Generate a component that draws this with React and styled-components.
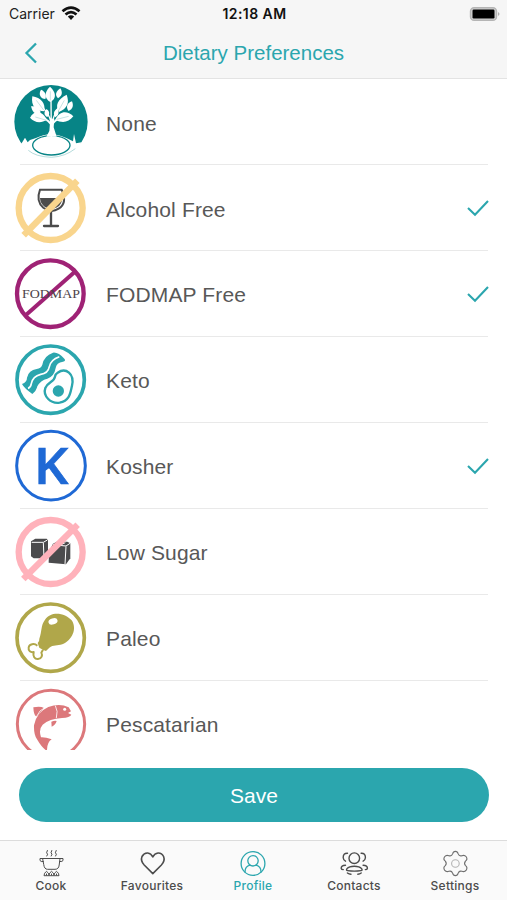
import React from "react";
import styled, { createGlobalStyle } from "styled-components";

const TEAL = "#2ba6ae";

const GlobalStyle = createGlobalStyle`
  * { box-sizing: border-box; }
  body { margin: 0; background: #fff; -webkit-font-smoothing: antialiased; }
`;

const Screen = styled.div`
  display: flex;
  flex-direction: column;
  width: 507px;
  height: 900px;
  overflow: hidden;
  background: #fff;
  font-family: "Liberation Sans", Arial, sans-serif;
`;

const Header = styled.header`
  height: 79px;
  flex: none;
  background: #f6f6f6;
  border-bottom: 1px solid #e3e3e3;
`;

const StatusBar = styled.div`
  height: 27px;
  display: grid;
  grid-template-columns: 1fr auto 1fr;
  align-items: center;
  padding: 0 7px 0 9px;
  font-family: Inter, sans-serif;
  font-size: 14px;
  color: #222;
`;

const Carrier = styled.div`
  display: flex;
  align-items: center;
  gap: 6px;
`;

const Clock = styled.div`
  font-weight: 600;
  font-size: 14px;
  letter-spacing: 0.42px;
  color: #111;
`;

const BatteryIcon = styled.svg`
  justify-self: end;
`;

const NavBar = styled.div`
  height: 51px;
  display: grid;
  grid-template-columns: 60px 1fr 60px;
  align-items: center;
`;

const BackButton = styled.button`
  border: 0;
  padding: 0 0 0 24px;
  background: none;
  display: flex;
`;

const Title = styled.h1`
  margin: 0;
  text-align: center;
  font-size: 20.5px;
  font-weight: 400;
  color: ${TEAL};
`;

const List = styled.ul`
  list-style: none;
  margin: 0;
  padding: 0;
  height: 671px;
  flex: none;
  overflow: hidden;
`;

const Row = styled.li`
  height: 85.9px;
  display: flex;
  align-items: flex-start;
  padding: 1px 19px 0 5px;
`;

const Badge = styled.svg`
  width: 92px;
  height: 84px;
  flex: none;
  margin-top: 0.3px;
`;

const RowBody = styled.div`
  flex: 1;
  height: 85.4px;
  margin-left: -77px;
  padding: 2px 0 0 86px;
  display: flex;
  align-items: center;
  justify-content: space-between;
  color: #585858;
  font-size: 21px;
  letter-spacing: 0.15px;
  background: linear-gradient(#e9e9e9, #e9e9e9) bottom / 100% 1px no-repeat;
`;

const CheckIcon = styled.svg`
  width: 22px;
  height: 18px;
  margin: -3px -1px 0 0;
  fill: none;
  stroke: ${TEAL};
  stroke-width: 2.1;
`;

const Footer = styled.div`
  height: 90px;
  flex: none;
  padding: 18px 18px 0 19px;
`;

const SaveButton = styled.button`
  width: 100%;
  height: 54px;
  border: 0;
  border-radius: 27px;
  background: ${TEAL};
  color: #fff;
  font: 400 21px "Liberation Sans", Arial, sans-serif;
  padding: 2px 0 0;
`;

const TabBar = styled.nav`
  flex: 1;
  display: grid;
  grid-template-columns: repeat(5, 101px);
  justify-content: center;
  border-top: 1px solid #dcdcdc;
  background: #fafafa;
`;

const Tab = styled.a`
  display: flex;
  flex-direction: column;
  align-items: center;
  padding: 7px 1px 0 0;
  color: ${(p) => (p.$active ? TEAL : "#4c4c4c")};
  font: 500 12px/15px Inter, sans-serif;
  letter-spacing: 0.25px;
`;

const TabIcon = styled.svg`
  width: 32px;
  height: 30px;
  fill: none;
  stroke: currentColor;
  stroke-width: ${(p) => p.$weight || 1.2};
  stroke-linecap: round;
  stroke-linejoin: round;
`;

const NoneArt = () => (
  <>
    <circle cx="138" cy="125" r="110" fill="#078486" />
    <path d="M49 191L60 173L68 187L75 180L93 174Q137 151 184 174L204 184L207 162L213 190L230 187Q201 237 138 237Q78 235 49 191Z" fill="#fff" />
    <ellipse cx="139" cy="196" rx="56" ry="29" fill="none" stroke="#078486" strokeWidth="4" />
    <path d="M70 211Q91 230 139 232Q180 230 211 206" fill="none" stroke="#8fc9c9" strokeWidth="2" />
    <g fill="none" stroke="#fff" strokeLinecap="round">
      <path d="M138 52L139 170M139 131Q132 94 103 75M141 131Q147 97 170 70" strokeWidth="4" />
      <path d="M138 132Q121 111 92 112M142 132Q158 112 180 112" strokeWidth="6" />
    </g>
    <path d="M136 116L148 116L146 142L155 170H124L133 153Z" fill="#fff" />
    <g fill="#fff">
      <path d="M135 20C117 36 118 56 136 66C156 55 153 36 135 20Z" />
      <path d="M82 49C77 78 93 94 118 94C122 70 108 53 82 49Z" />
      <path d="M185 44C158 57 149 77 162 96C187 85 194 68 185 44Z" />
      <path d="M75 113C89 87 111 92 126 119C107 131 89 128 75 113Z" />
      <path d="M151 119C165 91 187 92 205 109C190 128 171 130 151 119Z" />
      <path d="M108 29C99 43 107 56 121 57C126 44 119 33 108 29Z" />
      <path d="M166 25C152 34 149 46 159 55C171 48 174 38 166 25Z" />
      <path d="M78 79C84 103 96 106 107 97C103 84 92 78 78 79Z" />
      <path d="M201 64C185 68 182 84 191 93C204 87 206 77 201 64Z" />
      <path d="M125 87C115 96 117 107 127 111C135 103 134 94 125 87Z" />
      <path d="M157 85C144 95 145 104 151 112C162 105 163 96 157 85Z" />
    </g>
    <path d="M136 34V61M94 61L116 90M178 61L160 93M91 111L125 121M191 109L155 118" fill="none" stroke="#8cc6c6" strokeWidth="1.5" />
  </>
);

const AlcoholArt = () => (
  <>
    <path d="M105 71H170Q188 112 161 128Q138 143 115 125Q92 106 105 71Z" fill="#fff" stroke="#4b4b4b" strokeWidth="6" />
    <path d="M105 96H171Q172 115 156 124Q137 134 119 122Q106 113 105 96Z" fill="#4b4b4b" />
    <path d="M138 133V178M117 180H159" fill="none" stroke="#4b4b4b" strokeWidth="7" strokeLinecap="round" />
    <circle cx="137" cy="126" r="96" fill="none" stroke="#f9d58d" strokeWidth="19" />
    <path d="M56 208L217 44" stroke="#f9d58d" strokeWidth="19" />
  </>
);

const FodmapArt = () => (
  <>
    <circle cx="136" cy="125" r="100" fill="none" stroke="#9f2275" strokeWidth="13" />
    <path d="M62 190L208 61" stroke="#9f2275" strokeWidth="12" />
    <text x="51" y="137" fontFamily="Liberation Serif, serif" fontSize="39" textLength="174" lengthAdjust="spacingAndGlyphs" fill="#4c4248">FODMAP</text>
  </>
);

const KetoArt = () => (
  <>
    <circle cx="137" cy="125" r="101" fill="none" stroke="#2ba6ae" strokeWidth="11" />
    <path d="M144 44Q160 42 178 62Q184 68 174 71Q154 74 152 90Q148 115 127 122Q106 127 97 145Q94 159 82 168Q57 150 51 138Q66 132 66 119Q71 96 95 93Q108 91 112 80Q117 53 144 44Z" fill="#2ba6ae" />
    <path d="M69 151Q77 149 79 137Q83 115 107 109Q129 107 133 86Q137 65 163 56" fill="none" stroke="#fff" strokeWidth="5" />
    <path d="M158 104C183 87 209 108 201 143C196 164 195 188 164 194C136 198 113 173 121 150C129 131 148 132 150 116Q151 108 158 104Z" fill="#fff" stroke="#2ba6ae" strokeWidth="7" />
    <circle cx="160" cy="159" r="17" fill="#2ba6ae" />
  </>
);

const KosherArt = () => (
  <>
    <circle cx="138" cy="125" r="103" fill="none" stroke="#1f69d5" strokeWidth="9" />
    <text x="86" y="179" fontFamily="Open Sans, sans-serif" fontWeight="600" fontSize="150" textLength="104" lengthAdjust="spacingAndGlyphs" fill="#1f69d5" stroke="#1f69d5" strokeWidth="2">K</text>
  </>
);

const SugarArt = () => (
  <>
    <path d="M78 94L91 86H125L129 91V127L117 145H86L78 139Z" fill="#4b4b4d" />
    <path d="M80 97H115L127 90M115 98L117 144" fill="none" stroke="#fff" strokeWidth="3" />
    <path d="M143 102L155 95H187L196 100V145L183 163L131 158L132 129Z" fill="#4b4b4d" />
    <path d="M143 104L183 108L195 100M183 109L180 163M170 103L181 98" fill="none" stroke="#fff" strokeWidth="3" />
    <circle cx="137" cy="126" r="96" fill="none" stroke="#ffb2bb" strokeWidth="19" />
    <path d="M55 207L218 44" stroke="#ffb2bb" strokeWidth="19" />
  </>
);

const PaleoArt = () => (
  <>
    <circle cx="137" cy="125" r="101" fill="none" stroke="#b0a74a" strokeWidth="11" />
    <path d="M97 149C88 141 73 144 71 154C69 165 77 170 86 168C83 181 89 190 99 189C111 188 113 178 109 170L114 161" fill="#fff" stroke="#b0a74a" strokeWidth="6" strokeLinejoin="round" />
    <path d="M120 71C139 43 181 51 200 73C217 98 202 133 172 145C157 149 145 147 133 155L123 165Q114 162 103 155L98 141Q104 136 103 128C111 106 107 88 120 71Z" fill="#b0a74a" />
    <ellipse cx="144" cy="76" rx="14" ry="9" fill="#fff" transform="rotate(-18 144 76)" />
  </>
);

const FishArt = () => (
  <g transform="translate(0 -4)">
    <circle cx="138" cy="130" r="101" fill="none" stroke="#dc787b" strokeWidth="9" />
    <path d="M87 134Q94 95 130 79Q164 66 191 80L198 92L189 97L199 102Q195 111 171 112Q133 114 113 132Q100 146 108 170Q120 169 140 176Q125 186 126 211Q111 202 96 176Q86 161 87 134Z" fill="#dc787b" />
    <path d="M93 107Q86 103 85 80Q106 75 117 82L97 106ZM139 123Q149 119 155 121Q151 134 140 138Z" fill="#dc787b" />
    <path d="M151 75Q160 91 154 112M95 107L105 91L118 82" fill="none" stroke="#fff" strokeWidth="2.5" />
    <circle cx="179" cy="86" r="4.5" fill="#fff" />
  </g>
);

const CookArt = () => (
  <>
    <path d="M8 10.5H25L24.2 17Q23.7 21.3 20 21.3H12.5Q9.4 21.3 8.8 17ZM8 10.5H5V12.5Q5.5 13.8 8.3 13.6M25 10.5H28V12.5Q27.5 13.8 24.8 13.6" />
    <path d="M12.4 2.5L11.6 4.8L12.6 6.2L11.8 8M16.8 2.5L16 4.8L17 6.2L16.2 8M21.2 2.5L20.4 4.8L21.4 6.2L20.6 8" />
    <path d="M9 27.3Q9 25 11.5 23.3Q14 25 14 27.3Q14 25 16.5 23.3Q19 25 19 27.3Q19 25 21.5 23.3Q24 25 24 27.3ZM11.5 27V26M16.5 27V26M21.5 27V26" />
  </>
);
const HeartArt = () => (
  <path d="M16.8 25.6L8.2 17Q4.3 12.8 6 8.5Q8 4.8 11.7 5Q15 5.3 16.8 9Q18.6 5.3 22 5Q25.8 4.8 27.6 8.5Q29.3 12.8 25.4 17Z" />
);
const ProfileArt = () => (
  <>
    <circle cx="16" cy="15.5" r="11.9" />
    <circle cx="16" cy="12.8" r="5.2" />
    <path d="M8 24C8 20 10.5 17.8 13 17.2M24 24C24 20 21.5 17.8 19 17.2" />
  </>
);
const ContactsArt = () => (
  <>
    <circle cx="16.3" cy="10.2" r="5.3" />
    <path d="M9.5 5.2Q5 5 5.2 9.8Q5.4 12.2 7.5 13.2M23.1 5.2Q27.6 5 27.4 9.8Q27.2 12.2 25.1 13.2" />
    <path d="M9.6 22.6Q7.8 22.4 9 20.6Q11 18.2 16.3 18.2Q21.6 18.2 23.6 20.6Q24.8 22.4 23 22.6Q16.3 23.6 9.6 22.6M7.5 17.3Q3 17.4 3.2 20.3Q3.4 21.6 5.3 21.6M25.1 17.3Q29.6 17.4 29.4 20.3Q29.2 21.6 27.3 21.6M9.4 25Q11 26.2 13 26.2M19.8 26.2Q21.8 26 23.2 25" />
  </>
);
const SettingsArt = () => (
  <>
    <path d="M13.6 5.9Q14.2 3.4 16.4 3.4Q18.6 3.4 19.2 5.9Q20.2 8.6 22.9 7.7Q25.6 6.6 27.2 8.8Q28.9 11.6 26.5 13.1Q24.6 15.5 26.5 17.6Q28.9 19.4 27.2 22.1Q25.6 24.4 22.9 23.3Q20.2 22.4 19.2 25.1Q18.6 27.6 16.4 27.6Q14.2 27.6 13.6 25.1Q12.6 22.4 9.9 23.3Q7.2 24.4 5.6 22.1Q3.9 19.4 6.3 17.6Q8.2 15.5 6.3 13.1Q3.9 11.6 5.6 8.8Q7.2 6.6 9.9 7.7Q12.6 8.6 13.6 5.9Z" opacity=".8" />
    <circle cx="16.4" cy="15.5" r="3.8" opacity=".4" />
  </>
);

const preferences = [
  { name: "None", Art: NoneArt },
  { name: "Alcohol Free", Art: AlcoholArt, checked: true },
  { name: "FODMAP Free", Art: FodmapArt, checked: true },
  { name: "Keto", Art: KetoArt },
  { name: "Kosher", Art: KosherArt, checked: true },
  { name: "Low Sugar", Art: SugarArt },
  { name: "Paleo", Art: PaleoArt },
  { name: "Pescatarian", Art: FishArt },
];

const tabs = [
  { name: "Cook", Art: CookArt, weight: 1 },
  { name: "Favourites", Art: HeartArt, weight: 1.6 },
  { name: "Profile", Art: ProfileArt, weight: 1.3, active: true },
  { name: "Contacts", Art: ContactsArt, weight: 1.4 },
  { name: "Settings", Art: SettingsArt, weight: 1.1 },
];

export default function App() {
  return (
    <Screen>
      <GlobalStyle />
      <Header>
        <StatusBar>
          <Carrier>
            Carrier
            <svg width="20" height="15" viewBox="0 0 20 15" fill="none" stroke="#111" strokeWidth="2.7">
              <path d="M1.5 5.2Q10-2.1 18.5 5.2M4.5 8.5Q10 3.8 15.5 8.5" />
              <path d="M6.8 10.6Q10 8 13.2 10.6L10 14Z" fill="#111" stroke="none" />
            </svg>
          </Carrier>
          <Clock>12:18 AM</Clock>
          <BatteryIcon width="31" height="16" viewBox="0 0 31 16">
            <rect x="1.5" y="1.7" width="26" height="12.6" rx="3.6" fill="#d2d2d2" stroke="#b5b5b5" strokeWidth="1.4" />
            <rect x="3.5" y="3.6" width="22" height="8.8" rx="1.2" fill="#000" />
            <path d="M29 6Q32 8 29 10Z" fill="#b0b0b0" />
          </BatteryIcon>
        </StatusBar>
        <NavBar>
          <BackButton aria-label="Back">
            <svg width="14" height="22" viewBox="0 0 14 22" fill="none" stroke={TEAL} strokeWidth="2.3">
              <path d="M12 1.5L2.5 11L12 20.5" />
            </svg>
          </BackButton>
          <Title>Dietary Preferences</Title>
        </NavBar>
      </Header>
      <List>
        {preferences.map(({ name, Art, checked }) => (
          <Row key={name}>
            <Badge viewBox="0 0 276 252"><Art /></Badge>
            <RowBody>
              {name}
              {checked && (
                <CheckIcon viewBox="0 0 22 18">
                  <path d="M1 9L8 15.7L21 2" />
                </CheckIcon>
              )}
            </RowBody>
          </Row>
        ))}
      </List>
      <Footer><SaveButton>Save</SaveButton></Footer>
      <TabBar>
        {tabs.map(({ name, Art, weight, active }) => (
          <Tab key={name} $active={active}>
            <TabIcon viewBox="0 0 32 30" $weight={weight}><Art /></TabIcon>
            {name}
          </Tab>
        ))}
      </TabBar>
    </Screen>
  );
}
